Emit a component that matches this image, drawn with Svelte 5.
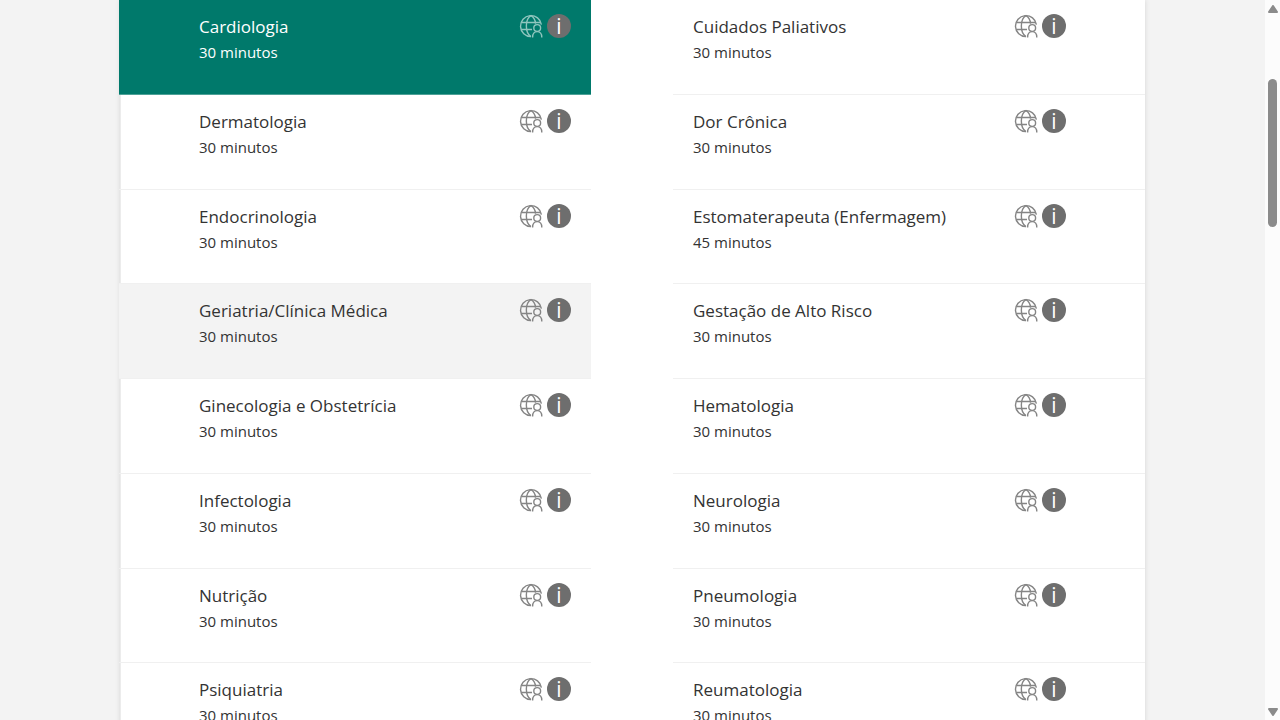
<script>
  const services = [
    { id: 'cardiologia', name: 'Cardiologia', minutes: 30 },
    { id: 'cuidados', name: 'Cuidados Paliativos', minutes: 30 },
    { id: 'dermatologia', name: 'Dermatologia', minutes: 30 },
    { id: 'dor', name: 'Dor Crônica', minutes: 30 },
    { id: 'endocrinologia', name: 'Endocrinologia', minutes: 30 },
    { id: 'estomaterapeuta', name: 'Estomaterapeuta (Enfermagem)', minutes: 45 },
    { id: 'geriatria', name: 'Geriatria/Clínica Médica', minutes: 30 },
    { id: 'gestacao', name: 'Gestação de Alto Risco', minutes: 30 },
    { id: 'ginecologia', name: 'Ginecologia e Obstetrícia', minutes: 30 },
    { id: 'hematologia', name: 'Hematologia', minutes: 30 },
    { id: 'infectologia', name: 'Infectologia', minutes: 30 },
    { id: 'neurologia', name: 'Neurologia', minutes: 30 },
    { id: 'nutricao', name: 'Nutrição', minutes: 30 },
    { id: 'pneumologia', name: 'Pneumologia', minutes: 30 },
    { id: 'psiquiatria', name: 'Psiquiatria', minutes: 30 },
    { id: 'reumatologia', name: 'Reumatologia', minutes: 30 }
  ];

  let selected = $state('cardiologia');
  let hovered = $state('geriatria');
</script>

<div class="window">
  <main>
    <ul class="services">
      {#each services as service (service.id)}
        <li
          class="service"
          class:selected={selected === service.id}
          class:hovered={hovered === service.id}
          onmouseenter={() => (hovered = service.id)}
        >
          <input type="radio" name="service" id={service.id} value={service.id} bind:group={selected} />
          <label for={service.id}>
            <span class="name">{service.name}</span>
            <span class="duration">{service.minutes} minutos</span>
          </label>
          <div class="icons">
            <svg class="globe" viewBox="0 0 24 24" aria-hidden="true">
              <path d="M12 22.6A10.5 10.5 0 1 1 22.4 10.6" />
              <path d="M12 22.6C5.8 19.2 5.8 5 12 1.6C14.8 3.2 16.3 6.4 16.6 9.6" />
              <path d="M2.3 8.5H21.7M2.3 15.5H13" />
              <circle cx="18.2" cy="14" r="3.4" />
              <path d="M13.6 23.4C13.6 19.8 15.4 17.6 18.2 17.6S22.8 19.8 22.8 23.4" />
            </svg>
            <button type="button" class="info" aria-label="Informações">i</button>
          </div>
        </li>
      {/each}
    </ul>
  </main>
  <div class="scrollbar" aria-hidden="true">
    <svg class="arrow" viewBox="0 0 10 8"><path d="M5 1L9 7H1Z" /></svg>
    <div class="track"><div class="thumb"></div></div>
    <svg class="arrow" viewBox="0 0 10 8"><path d="M1 1H9L5 7Z" /></svg>
  </div>
</div>

<style>
  :global(body) {
    background: #f3f3f3;
  }

  .window {
    display: flex;
    height: 100vh;
    overflow: hidden;
    color: #333;
    font-family: 'Segoe UI', 'Open Sans', 'Noto Sans', sans-serif;
  }

  main {
    flex: 1;
    min-width: 0;
  }

  .services {
    display: grid;
    grid-template-columns: 470fr 472fr;
    grid-auto-rows: 1fr;
    column-gap: 82px;
    box-sizing: border-box;
    max-width: 1025px;
    min-height: 758px;
    margin: 0 auto;
    padding: 0;
    list-style: none;
    background: #fff;
    border-left: 1px solid #ececec;
    box-shadow: 0 0 5px rgba(0, 0, 0, 0.12);
  }

  .service {
    display: flex;
    align-items: flex-start;
    box-sizing: border-box;
    padding: 14px 79px 0 20px;
    border-bottom: 1px solid #f0f0f0;
  }

  .service:nth-child(odd) {
    margin-left: -2px;
    padding: 14px 20px 0 80px;
  }

  .hovered {
    background: #f3f3f3;
  }

  .selected {
    color: #fff;
    background: #00796b;
    border-bottom-color: #4da197;
  }

  input {
    appearance: none;
    width: 0;
    height: 0;
    margin: 0;
  }

  label {
    display: flex;
    flex: 1;
    flex-direction: column;
    cursor: pointer;
  }

  .name {
    font-size: 17px;
    line-height: 26px;
  }

  .duration {
    font-size: 15px;
    line-height: 25px;
  }

  .icons {
    display: flex;
    gap: 4px;
  }

  .globe {
    width: 24px;
    height: 24px;
    fill: none;
    stroke: #858585;
    stroke-width: 1.4;
  }

  .selected .globe {
    stroke: #8fc5be;
  }

  .info {
    width: 24px;
    height: 24px;
    padding: 0;
    color: #fff;
    font: 500 21px/24px 'Segoe UI', 'Open Sans', sans-serif;
    background: #6e6e6e;
    border: 0;
    border-radius: 50%;
    cursor: pointer;
  }

  .scrollbar {
    display: flex;
    flex-direction: column;
    align-items: center;
    box-sizing: border-box;
    width: 15px;
    padding: 5px 0 4px;
    background: #fcfcfc;
  }

  .arrow {
    width: 10px;
    height: 8px;
    fill: #8b8b8b;
    stroke: #8b8b8b;
    stroke-width: 2;
    stroke-linejoin: round;
  }

  .track {
    flex: 1;
    padding-top: 66px;
  }

  .thumb {
    width: 9px;
    height: 148px;
    background: #8b8b8b;
    border-radius: 5px;
  }
</style>
